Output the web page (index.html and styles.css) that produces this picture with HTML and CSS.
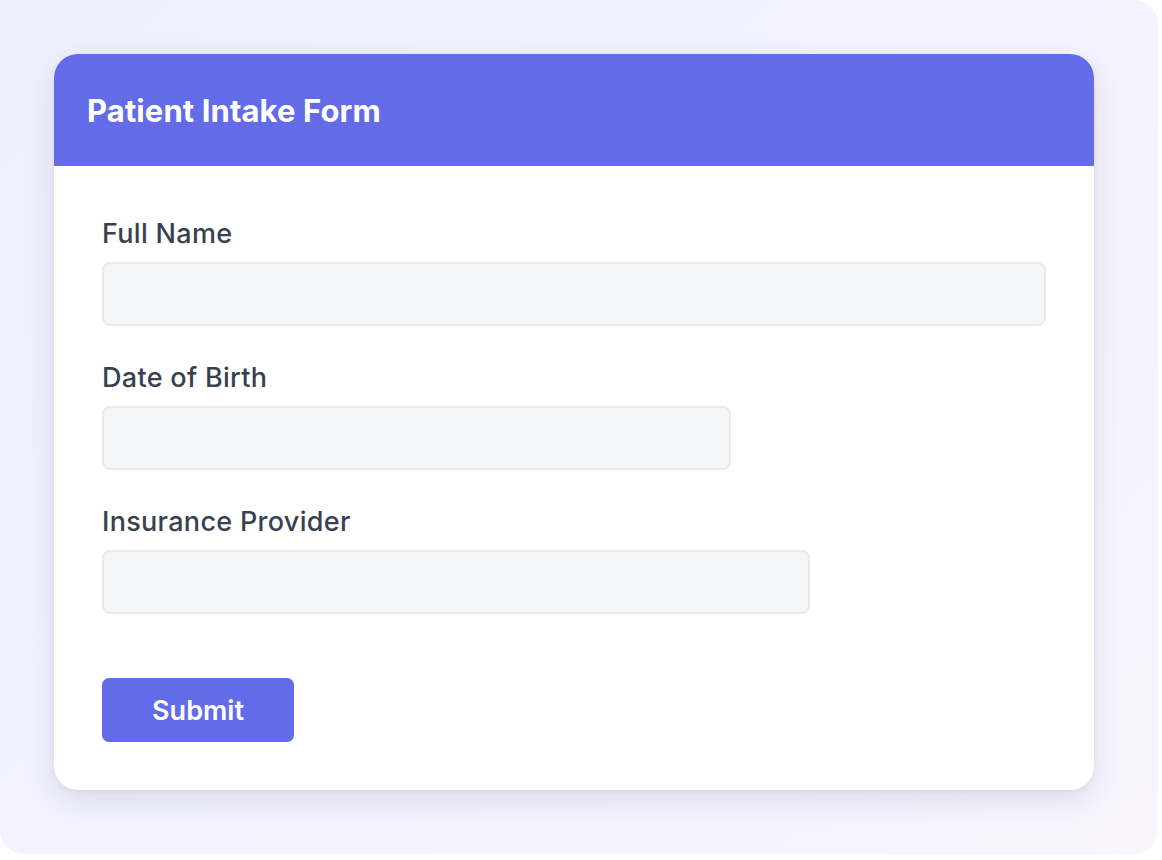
FILE: index.html
```html
<!DOCTYPE html>
<html lang="en">
<head>
<meta charset="utf-8">
<title>Patient Intake Form</title>
<link rel="stylesheet" href="styles.css">
</head>
<body>
<div class="page">
  <form class="card">
    <div class="card-header">
      <h1 class="title">Patient Intake Form</h1>
    </div>
    <div class="card-body">
      <div class="field">
        <label class="label" for="name">Full Name</label>
        <input class="input input-full" id="name" type="text">
      </div>
      <div class="field">
        <label class="label" for="dob">Date of Birth</label>
        <input class="input input-two-thirds" id="dob" type="text">
      </div>
      <div class="field">
        <label class="label" for="ins">Insurance Provider</label>
        <input class="input input-three-quarters" id="ins" type="text">
      </div>
      <button class="submit" type="button">Submit</button>
    </div>
  </form>
</div>
</body>
</html>
```

FILE: styles.css
```css
html, body {
  margin: 0;
  padding: 0;
  background: #ffffff;
}

body {
  font-family: Inter, "Noto Sans", sans-serif;
}

.page {
  width: 1158px;
  height: 854px;
  box-sizing: border-box;
  padding: 54px;
  background: linear-gradient(135deg, #eef0fd 0%, #f3f2fe 50%, #f8f5fe 100%);
  border-radius: 0 24px 24px 24px;
}

.card {
  width: 1040px;
  background: #ffffff;
  border-radius: 24px;
  overflow: hidden;
  box-shadow: 0 10px 28px rgba(60, 60, 110, 0.13), 0 2px 6px rgba(60, 60, 110, 0.05);
}

.card-header {
  height: 112px;
  background: #636be9;
  display: flex;
  align-items: center;
  padding: 0 33px;
}

.title {
  margin: 0;
  color: #ffffff;
  font-size: 31px;
  font-weight: 700;
  letter-spacing: 0.1px;
}

.card-body {
  padding: 50px 48px 48px 48px;
  display: flex;
  flex-direction: column;
}

.field {
  display: flex;
  flex-direction: column;
  margin-bottom: 34px;
}

.label {
  font-size: 27px;
  line-height: 36px;
  font-weight: 500;
  letter-spacing: 0.3px;
  color: #374151;
  margin-bottom: 10px;
}

.input {
  height: 64px;
  box-sizing: border-box;
  background: #f5f6f8;
  border: 2px solid #e8e9ed;
  border-radius: 8px;
  outline: none;
}

.input-full { width: 944px; }
.input-two-thirds { width: 629px; }
.input-three-quarters { width: 708px; }

.submit {
  margin-top: 30px;
  width: 192px;
  height: 64px;
  border: none;
  border-radius: 7px;
  background: #636be9;
  color: #ffffff;
  font-family: Inter, "Noto Sans", sans-serif;
  font-size: 27px;
  font-weight: 600;
}
```
